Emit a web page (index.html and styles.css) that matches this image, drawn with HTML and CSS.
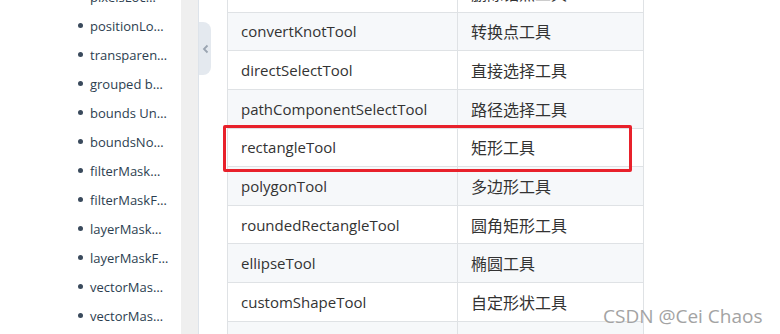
FILE: index.html
```html
<!DOCTYPE html>
<html lang="zh">
<head>
<meta charset="utf-8">
<title>Photoshop tools</title>
<link rel="stylesheet" href="styles.css">
</head>
<body>
<div class="page">
  <aside class="sidebar">
    <ul class="toc">
      <li><span>pixelsLoc…</span></li>
      <li><span>positionLo…</span></li>
      <li><span>transparen…</span></li>
      <li><span>grouped b…</span></li>
      <li><span>bounds Un…</span></li>
      <li><span>boundsNo…</span></li>
      <li><span>filterMask…</span></li>
      <li><span>filterMaskF…</span></li>
      <li><span>layerMask…</span></li>
      <li><span>layerMaskF…</span></li>
      <li><span>vectorMas…</span></li>
      <li><span>vectorMas…</span></li>
    </ul>
  </aside>
  <div class="gutter"></div>
  <main class="content">
    <button class="collapse" aria-label="collapse sidebar">
      <svg width="7" height="10" viewBox="0 0 7 10"><path d="M5.5 1.5 L2 5 L5.5 8.5" fill="none" stroke="#9aa4b1" stroke-width="1.8"/></svg>
    </button>
    <div class="table-wrap">
      <table class="tools">
        <tbody>
          <tr><td>deleteKnotTool</td><td class="zh">删除锚点工具</td></tr>
          <tr><td>convertKnotTool</td><td class="zh">转换点工具</td></tr>
          <tr><td>directSelectTool</td><td class="zh">直接选择工具</td></tr>
          <tr><td>pathComponentSelectTool</td><td class="zh">路径选择工具</td></tr>
          <tr><td>rectangleTool</td><td class="zh">矩形工具</td></tr>
          <tr><td>polygonTool</td><td class="zh">多边形工具</td></tr>
          <tr><td>roundedRectangleTool</td><td class="zh">圆角矩形工具</td></tr>
          <tr><td>ellipseTool</td><td class="zh">椭圆工具</td></tr>
          <tr><td>customShapeTool</td><td class="zh">自定形状工具</td></tr>
          <tr><td>lineTool</td><td class="zh">直线工具</td></tr>
        </tbody>
      </table>
      <div class="highlight"></div>
    </div>
  </main>
</div>
<div class="watermark">CSDN @Cei Chaos</div>
</body>
</html>
```

FILE: styles.css
```css
html, body {
  margin: 0;
  padding: 0;
  background: #fff;
  overflow: hidden;
}
body {
  width: 780px;
  height: 334px;
  position: relative;
  font-family: "Open Sans", "Noto Sans CJK SC", sans-serif;
}
.page {
  display: flex;
  height: 334px;
  overflow: hidden;
}
.sidebar {
  width: 181px;
  flex: none;
  background: #fff;
  overflow: hidden;
}
.toc {
  list-style: none;
  margin: -18px 0 0 0;
  padding: 0 0 0 78px;
}
.toc li {
  height: 29px;
  display: flex;
  align-items: center;
  color: #2c3e50;
  font-size: 13px;
}
.toc li::before {
  content: "";
  width: 5px;
  height: 5px;
  border-radius: 50%;
  background: #3a4a5c;
  flex: none;
  margin-right: 7px;
}
.toc li span {
  white-space: nowrap;
}
.gutter {
  width: 17px;
  flex: none;
  background: #efefef;
  border-right: 1px solid #dde3ea;
}
.content {
  flex: 1;
  position: relative;
  padding-left: 28px;
  overflow: hidden;
}
.collapse {
  position: absolute;
  left: 0;
  top: 22px;
  width: 12px;
  height: 53px;
  padding: 0;
  border: none;
  background: #e4e9ef;
  border-radius: 0 8px 8px 0;
  display: flex;
  align-items: center;
  justify-content: center;
}
.table-wrap {
  position: relative;
  width: 417px;
  margin-top: -27px;
}
.tools {
  border-collapse: collapse;
  width: 417px;
  table-layout: fixed;
  color: #333;
  font-size: 15px;
}
.tools td {
  border: 1px solid #dfe2e5;
  height: 38.65px;
  padding: 0 0 0 13px;
  box-sizing: border-box;
  white-space: nowrap;
}
.tools td:first-child { width: 230px; }
.tools td.zh { font-size: 16px; }
.tools tr:nth-child(even) { background: #f6f8fa; }
.highlight {
  position: absolute;
  left: -4px;
  top: 152px;
  width: 409px;
  height: 47px;
  border: 3px solid #e8212b;
  border-radius: 2px;
  box-sizing: border-box;
}
.watermark {
  position: absolute;
  left: 603px;
  top: 303px;
  font-family: "Open Sans", sans-serif;
  font-size: 19px;
  color: #a3a3a3;
  text-shadow: 0 0 1px #fff;
}
```
